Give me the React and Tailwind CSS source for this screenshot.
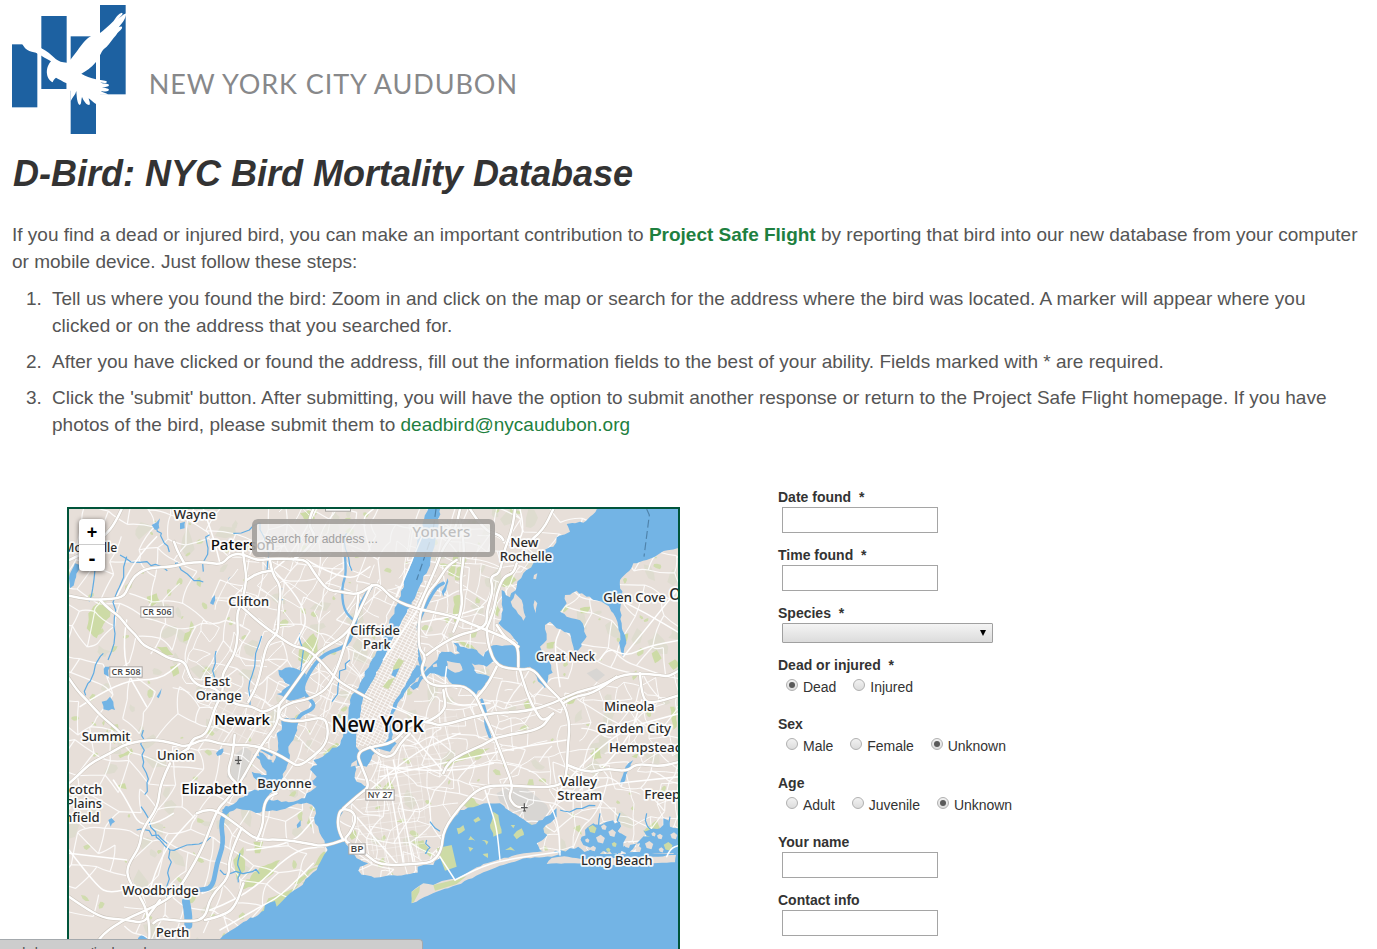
import React from "react";

/* ---------- map geometry (units are thirds of a pixel) ---------- */

function rng(seed) {
  let s = seed;
  return () => {
    s = (s * 1664525 + 1013904223) % 4294967296;
    return s / 4294967296;
  };
}

function pts(str) {
  return str.trim().split(/\s+/).map((p) => p.split(",").map(Number));
}

// Smooth line through the midpoints of a list of points
function smooth(str) {
  const p = pts(str);
  let d = `M${p[0][0]} ${p[0][1]}`;
  for (let i = 1; i < p.length - 1; i++) {
    const mx = (p[i][0] + p[i + 1][0]) / 2;
    const my = (p[i][1] + p[i + 1][1]) / 2;
    d += `Q${p[i][0]} ${p[i][1]} ${mx} ${my}`;
  }
  const l = p[p.length - 1];
  return d + `L${l[0]} ${l[1]}`;
}

function rough(str, amp, seed) {
  const r = rng(seed);
  const p = pts(str);
  const out = [];
  for (let i = 0; i < p.length; i++) {
    const a = p[i];
    const b = p[(i + 1) % p.length];
    const len = Math.hypot(b[0] - a[0], b[1] - a[1]);
    const n = len > 240 ? 1 : Math.max(1, Math.round(len / 13));
    for (let k = 0; k < n; k++) {
      const t = k / n;
      const j = k === 0 ? 0 : amp;
      out.push(
        (a[0] + (b[0] - a[0]) * t + (r() - 0.5) * j).toFixed(1) +
          "," +
          (a[1] + (b[1] - a[1]) * t + (r() - 0.5) * j).toFixed(1)
      );
    }
  }
  return out.join(" ");
}

function mesh(x0, y0, x1, y1, step, jitter, keep, angle, seed) {
  const r = rng(seed);
  const cols = Math.ceil((x1 - x0) / step) + 1;
  const rows = Math.ceil((y1 - y0) / step) + 1;
  const cx = (x0 + x1) / 2;
  const cy = (y0 + y1) / 2;
  const c = Math.cos(angle);
  const s = Math.sin(angle);
  const g = [];
  for (let j = 0; j < rows; j++) {
    g.push([]);
    for (let i = 0; i < cols; i++) {
      const x = x0 + i * step + (r() - 0.5) * jitter - cx;
      const y = y0 + j * step + (r() - 0.5) * jitter - cy;
      g[j].push([Math.round(cx + x * c - y * s), Math.round(cy + x * s + y * c)]);
    }
  }
  let d = "";
  const curve = (a, b) => {
    const mx = (a[0] + b[0]) / 2 + (r() - 0.5) * jitter * 0.4;
    const my = (a[1] + b[1]) / 2 + (r() - 0.5) * jitter * 0.4;
    d += `M${a[0]} ${a[1]}Q${mx.toFixed(0)} ${my.toFixed(0)} ${b[0]} ${b[1]}`;
  };
  for (let j = 0; j < rows; j++)
    for (let i = 0; i < cols; i++) {
      if (i + 1 < cols && r() < keep) curve(g[j][i], g[j][i + 1]);
      if (j + 1 < rows && r() < keep) curve(g[j][i], g[j + 1][i]);
    }
  return d;
}

function blobs(n, size, seed) {
  const r = rng(seed);
  const out = [];
  for (let i = 0; i < n; i++) {
    const x = 27 + r() * 1830;
    const y = 27 + r() * 1300;
    const k = 5 + Math.floor(r() * 4);
    const w = size * (0.35 + r());
    const tilt = r() * 3;
    const p = [];
    for (let q = 0; q < k; q++) {
      const a = (q / k) * Math.PI * 2;
      const m = w * (0.5 + r() * 0.6);
      const ex = Math.cos(a) * m;
      const ey = Math.sin(a) * m * 0.6;
      p.push(
        (x + ex * Math.cos(tilt) - ey * Math.sin(tilt)).toFixed(0) +
          "," +
          (y + ex * Math.sin(tilt) + ey * Math.cos(tilt)).toFixed(0)
      );
    }
    out.push(p.join(" "));
  }
  return out;
}

function creek(x, y, dx, dy, n, seed) {
  const r = rng(seed);
  let d = `M${x} ${y}`;
  for (let i = 0; i < n; i++) {
    x += dx + (r() - 0.5) * 22;
    y += dy + (r() - 0.5) * 22;
    d += `L${x.toFixed(0)} ${y.toFixed(0)}`;
  }
  return d;
}

const HARBOR =
  "430,1360 470,1325 500,1300 560,1262 612,1232 625,1205 645,1203 650,1220 690,1180 720,1160 770,1110 803,1050 785,1010 765,970 765,925 740,908 700,915 660,930 600,938 560,930 530,925 500,945 485,930 500,922 530,905 570,875 605,865 590,840 575,815 620,825 600,780 578,762 640,788 655,750 650,700 665,690 668,655 705,655 712,690 700,720 685,740 690,765 680,800 660,845 630,880 620,895 640,902 700,905 735,895 740,880 770,860 745,845 770,830 750,808 772,795 760,780 800,760 840,735 850,695 865,660 870,600 900,550 930,490 965,430 995,350 1015,300 1050,200 1080,110 1105,20 1142,20 1125,130 1100,220 1070,280 1040,340 1000,410 970,480 940,540 910,590 900,650 890,700 888,740 900,755 930,735 970,730 985,715 985,660 1000,610 1025,570 1050,530 1070,495 1100,500 1070,535 1040,570 1020,600 1000,640 1000,680 995,715 1010,730 990,755 950,745 935,775 920,800 885,795 885,820 890,845 925,860 890,895 850,925 835,960 835,1000 850,1020 870,1045 890,1075 925,1090 900,1100 895,1112 905,1124 960,1132 1000,1126 1073,1118 1073,1100 1120,1095 1145,1060 1145,1010 1170,970 1200,930 1240,922 1280,910 1320,910 1360,940 1400,965 1415,975 1470,945 1490,925 1490,950 1450,985 1462,1005 1430,1030 1440,1050 1500,1055 1530,1062 1860,1062 1860,1360";
const SOUND =
  "1625,20 1590,50 1570,68 1520,72 1530,95 1490,112 1480,140 1440,155 1420,190 1390,220 1370,260 1350,292 1325,270 1325,340 1315,370 1350,400 1375,430 1310,435 1290,440 1270,470 1250,450 1180,428 1200,460 1145,455 1120,490 1090,525 1050,560 1060,570 1110,520 1160,530 1180,555 1220,560 1240,590 1275,560 1290,530 1250,520 1235,490 1280,500 1305,480 1330,500 1375,505 1410,500 1430,530 1455,565 1465,525 1478,518 1460,470 1440,440 1460,420 1455,375 1470,365 1490,385 1530,400 1540,440 1550,462 1580,410 1568,370 1520,350 1500,335 1520,310 1515,285 1550,272 1580,290 1625,305 1660,340 1675,380 1680,440 1690,470 1698,420 1685,370 1680,330 1685,290 1680,240 1720,190 1760,180 1800,160 1860,145 1860,20";
const ROCKAWAY =
  "1055,1175 1090,1150 1120,1155 1160,1140 1190,1138 1240,1108 1270,1092 1320,1078 1380,1062 1475,1050 1500,1062 1475,1070 1400,1074 1330,1095 1260,1122 1190,1155 1130,1175 1055,1210";
const LONG_BEACH =
  "1460,1092 1475,1074 1500,1070 1600,1078 1700,1072 1780,1070 1848,1065 1845,1087 1780,1090 1700,1098 1600,1092 1530,1090";
const MANHATTAN =
  "888,740 890,700 900,650 910,590 940,540 970,480 1000,410 1040,340 1080,270 1095,290 1070,380 1075,470 1050,530 1025,570 1000,610 985,660 985,715 970,730 930,735";

const ISLANDS = [
  "1365,280 1385,300 1397,350 1390,362 1368,330 1352,305",
  "1422,225 1432,220 1428,238 1420,236",
  "1424,300 1432,310 1428,340 1422,325",
  "1160,482 1200,490 1208,510 1185,518 1162,505",
  "1118,495 1130,490 1132,500 1120,502",
  "875,790 890,780 892,795 872,800",
];
const BAY_ISLANDS = [
  "1190,985 1210,975 1215,990 1195,1003",
  "1240,960 1255,950 1262,960 1246,968",
  "1225,1040 1240,1045 1230,1055",
  "1300,935 1315,945 1325,1000 1300,1010 1290,975",
  "1360,1005 1385,985 1392,1005 1370,1018",
  "1265,1020 1285,1025 1280,1035",
  "1352,975 1365,975 1360,985",
  "1225,1020 1232,1008 1246,1022",
  "1335,1050 1352,1040 1365,1052",
  "1268,1062 1284,1060 1284,1074",
];

const MARSH = [
  "1565,1010 1575,990 1600,970 1640,965 1680,965 1680,1000 1700,1010 1690,1040 1740,1030 1740,1060 1860,1060 1860,985 1830,980 1810,955 1800,985 1750,990 1770,1010 1740,1020 1700,1060 1600,1060 1570,1035",
  "1500,1050 1530,1045 1590,1050 1640,1065 1560,1075 1500,1064",
];

const MARSH_ISLANDS = [
  [1598, 988, 13], [1632, 982, 9], [1657, 1000, 12], [1622, 1018, 14], [1663, 1034, 8], [1702, 1035, 10],
  [1768, 1036, 13], [1800, 1010, 9], [1825, 1040, 14], [1600, 1046, 9], [1781, 1003, 7], [1842, 1008, 11],
  [1645, 1050, 7], [1735, 1047, 10], [1582, 1022, 7], [1804, 1050, 8],
];

const LAKES = [
  "655,510 700,503 738,522 732,590 690,602 650,582 690,555 660,530",
  "27,235 45,190 60,195 45,240 30,265",
  "275,75 300,55 298,85 285,90",
  "360,70 375,65 374,85 360,88",
  "135,500 150,500 146,530 132,522",
  "125,605 150,590 160,605 165,630 130,628",
  "450,310 465,285 460,315",
  "505,235 512,228 508,248",
  "290,590 305,565 296,595",
  "145,960 155,954 165,965 152,980",
  "468,760 490,745 490,755 472,768",
  "1145,275 1163,235 1165,245 1150,290",
  "710,975 722,960 722,978 712,985",
  "1705,790 1720,780 1690,850 1680,850",
  "595,755 635,780 635,795 600,775",
];

const PARKS = [
  "85,340 120,300 150,320 150,350 125,385 110,415 80,385",
  "260,290 290,280 300,305 275,320",
  "330,500 350,492 358,520 340,530",
  "290,440 320,440 340,465 310,465",
  "720,440 760,400 775,420 770,470 730,490 715,480",
  "375,400 395,385 385,420 370,425",
  "720,40 750,28 765,55 740,70",
  "1180,160 1200,150 1180,230 1165,225",
  "1190,205 1215,190 1205,240 1185,240",
  "1180,290 1200,285 1198,365 1182,365",
  "1325,240 1350,215 1370,240 1345,262 1328,260",
  "1350,285 1372,280 1370,305 1355,305",
  "1305,300 1320,330 1315,350 1300,340",
  "1185,420 1235,435 1255,455 1215,440",
  "1560,325 1592,320 1580,340 1562,340",
  "1460,430 1485,425 1480,445 1460,445",
  "1680,410 1705,400 1700,425",
  "1775,460 1790,450 1805,475 1785,490",
  "1825,490 1845,478 1858,495 1840,510",
  "1830,620 1843,620 1850,680 1840,690",
  "1590,760 1620,755 1625,775 1600,780",
  "1150,800 1160,780 1250,745 1290,745 1260,765 1190,785 1165,805",
  "1055,1025 1090,1020 1120,1065 1110,1070",
  "965,870 990,840 1003,865",
  "1210,915 1235,890 1260,915 1230,930",
  "520,1080 550,1040 555,1110 530,1140",
  "540,1170 600,1100 660,1080 640,1120 580,1160",
  "580,1025 610,1025 600,1060 585,1060",
  "600,1240 625,1195 690,1170 720,1150 660,1215 620,1250",
  "760,1100 790,1055 800,1055 780,1095",
  "790,760 830,728 845,738 800,785",
  "740,970 748,945 755,985",
  "800,1095 760,1110 720,1150 700,1150 745,1110",
  "740,1200 760,1190 765,1200",
  "175,765 215,745 220,758 180,775",
  "170,860 195,850 200,868",
  "555,760 570,750 560,780",
  "870,1000 885,990 890,1010 875,1020",
  "1390,610 1405,600 1415,625 1400,635",
  "1510,590 1550,580 1540,610 1515,610",
  "1715,770 1735,760 1730,775",
  "1540,985 1560,975 1565,1005",
  "1750,995 1790,960 1800,985 1770,1000",
];

const GREYS = [
  "500,830 530,760 555,740 575,755 560,830 530,855",
  "1310,880 1340,865 1400,865 1460,915 1470,940 1420,978 1390,950 1320,905",
  "1580,520 1610,505 1635,525 1610,545",
];

const MAJOR = [
  "27,287 60,295 120,300 190,293 205,260 225,225 265,203 340,200 373,190 430,185 485,195 510,165 545,160 590,182 640,175 700,178 740,180 760,215 800,270 840,275 895,285 935,255 960,255 1000,300 1080,330 1170,345 1240,375 1280,390 1350,420 1375,440 1375,500",
  "120,300 150,330 180,350 205,385 225,402 250,437 285,450 330,478 375,482 390,535 420,560 460,560 490,590 530,615 580,620 610,640 655,615",
  "185,27 165,70 140,100 100,140 60,165 27,180",
  "342,125 350,150 373,190",
  "548,150 555,200 560,240 545,310 530,340 535,400 525,460 500,500 485,530 490,580 465,620 445,690 425,710 400,715 385,745",
  "630,180 635,220 665,260 655,340 655,400 620,430 605,500 590,560 565,605",
  "635,212 600,215 560,240",
  "545,320 600,370 650,405 700,440 740,445 790,490 830,540 880,570 935,600",
  "895,285 890,360 850,410 800,440 770,460 720,530 670,600 655,615 655,670 600,740 540,850 500,900 470,930 430,1040 380,1130 340,1190 250,1235 190,1260 130,1300 95,1350",
  "935,255 890,350 865,400 850,450 830,510 800,570 740,600 700,605 660,625 655,660 720,665 790,650 805,680 800,730 760,770 715,800 690,785 640,755 580,735 490,735 430,715 380,742 340,730 280,718 200,730 150,760 90,790 50,830 27,850",
  "330,790 300,850 295,920 245,990 240,1040 200,1100 205,1140 240,1190 260,1230 270,1290 265,1350",
  "345,770 385,745",
  "27,535 50,570 80,600 115,640 150,670 185,700 205,730",
  "27,1190 70,1220 130,1255 190,1258 250,1270 270,1240 300,1200",
  "410,940 430,930 470,930 545,985 590,1020 665,1018 740,1030 790,1040 850,1020",
  "545,985 505,1070 510,1130 450,1190 435,1260 370,1265 300,1255 280,1270",
  "590,1020 610,980 610,920 625,890 650,880",
  "435,1260 500,1245 530,1210 550,1150",
  "524,705 520,760 500,820 530,850",
  "850,1020 833,990 835,940 850,925 880,935 888,960 870,1000 850,1020 885,1040 920,1065 960,1097 1080,1092 1120,1085 1145,1050 1150,990 1200,920 1260,860 1340,855 1430,862 1500,858 1520,830 1523,740 1530,670 1510,605 1460,560 1420,505 1380,510 1310,500 1285,440 1280,385",
  "850,925 900,880 930,860 905,800 890,760 930,740 1000,730 1050,670 1110,665 1140,680 1270,640 1400,635 1480,610 1550,575 1620,560 1680,525 1740,520 1800,525 1825,530 1860,510",
  "930,740 960,770 1000,770 1020,730 1050,700",
  "1080,345 1070,440 1100,470 1080,510 1110,560 1200,555 1230,570 1250,592 1270,640 1300,700 1330,780 1360,860 1345,890 1365,920 1390,922",
  "1100,465 1170,410 1280,385 1280,330 1300,270 1290,230 1320,220 1330,160 1345,120 1360,70 1365,27",
  "1280,385 1300,340 1310,280 1330,230 1360,220 1370,190",
  "1375,440 1340,420 1310,375",
  "1250,592 1280,560 1310,500",
  "1380,510 1400,580 1430,640 1450,665 1480,640",
  "1510,610 1540,590 1600,580 1670,530",
  "1740,520 1745,600 1780,610 1860,585",
  "1080,345 1100,280 1130,250 1160,200 1190,180",
  "1200,27 1185,100 1150,140 1130,200 1075,320",
  "1230,27 1270,90 1320,105 1330,120",
  "1420,115 1450,90 1480,27",
  "1522,795 1580,820 1640,805 1700,815 1730,790 1800,800 1860,785",
  "1150,820 1160,790 1210,760 1270,735 1310,710 1440,690 1470,650",
  "1100,665 1160,640 1150,570",
  "1180,395 1210,330 1200,250 1215,150 1200,60",
  "760,27 740,70 770,110 730,160 700,178",
];

const SECOND = [
  "1275,870 1290,920 1310,980 1320,1080",
  "1130,1055 1185,1140",
  "1470,915 1495,960 1500,1065",
  "1185,1140 1250,1105 1330,1080 1500,1055",
  "1820,1070 1830,1045 1860,1035",
  "1075,325 970,480",
  "1090,100 1010,290",
  "990,620 1050,640 1060,660",
  "770,27 700,160 640,210",
  "960,830 1330,750 1520,720",
  "960,800 1150,820 1300,790",
  "880,940 1010,1090",
  "980,800 1030,1090",
  "1000,780 1060,1090",
  "920,880 1050,760 1200,700",
  "1050,700 1150,815",
  "1160,500 1140,620 1290,610",
  "1540,900 1570,860 1860,830",
  "1500,870 1640,700 1860,640",
  "1560,870 1700,740 1745,600",
  "1620,480 1640,440 1700,470 1760,440 1860,420",
  "1690,470 1860,260",
  "1500,560 1480,440 1500,390",
  "1700,310 1760,340 1860,400",
  "60,620 180,540 300,540 360,490",
  "200,360 180,480 260,620",
  "27,1050 110,1160 150,1180 230,1160",
  "27,1060 200,1080",
  "340,940 250,1000 200,900 160,840",
  "270,1170 300,1060 410,940",
  "560,1050 690,1040 760,960",
  "450,1230 560,1190 700,1050 790,1040",
  "480,1290 600,1220 660,1190 760,1090",
  "430,27 460,110 480,190",
  "290,110 230,170 170,290",
  "740,180 860,250 930,200",
  "640,210 760,330 700,440",
  "930,150 900,60 940,27",
  "1380,27 1400,110 1340,130",
  "1060,370 1180,350 1270,320",
];

const LABELS = [
  ["Wayne", 341, 56, 127, 40],
  ["Montville", 10, 155, 162, 40],
  ["Paterson", 452, 151, 193, 45, 1],
  ["Clifton", 505, 318, 122, 40],
  ["Cliffside", 871, 405, 149, 40],
  ["Park", 909, 446, 83, 40],
  ["East", 432, 558, 78, 40],
  ["Orange", 407, 600, 138, 40],
  ["Newark", 463, 674, 167, 45, 1],
  ["New York", 814, 695, 278, 64, 1],
  ["Yonkers", 1057, 110, 174, 45],
  ["New", 1351, 142, 84, 40],
  ["Rochelle", 1319, 184, 158, 40],
  ["Glen Cove", 1630, 306, 187, 40],
  ["Oyster Bay", 1828, 300, 235, 49],
  ["Great Neck", 1428, 482, 177, 35],
  ["Mineola", 1632, 633, 152, 40],
  ["Garden City", 1611, 698, 222, 40],
  ["Hempstead", 1647, 757, 222, 40],
  ["Valley", 1499, 858, 112, 40],
  ["Stream", 1492, 899, 134, 40],
  ["Freeport", 1753, 897, 165, 40],
  ["Long Beach", 1563, 1096, 215, 40],
  ["Summit", 65, 722, 146, 40],
  ["Union", 291, 781, 113, 40],
  ["Elizabeth", 364, 881, 198, 45, 1],
  ["Bayonne", 592, 865, 163, 40],
  ["Scotch", 5, 882, 122, 40],
  ["Plains", 18, 924, 108, 40],
  ["Plainfield", -56, 966, 175, 40],
  ["Woodbridge", 187, 1185, 229, 40],
  ["Perth", 288, 1310, 100, 40],
];

const SHIELDS = [
  ["CR 506", 241, 319, 100],
  ["CR 508", 148, 499, 100],
  ["CR 75", 795, 1, 78],
  ["NY 27", 916, 868, 88],
  ["BP", 865, 1030, 52],
];

const CREEKS = [
  creek(600, 68, 6, 20, 6, 3),
  creek(600, 68, -14, 6, 4, 4),
  creek(180, 165, 22, 4, 8, 5),
  creek(110, 130, -4, 20, 8, 6),
  creek(200, 170, -3, 22, 12, 7),
  creek(345, 190, 14, 10, 6, 8),
  creek(430, 215, 4, -16, 6, 9),
  creek(290, 85, 8, 16, 6, 10),
  creek(470, 610, 2, -18, 8, 11),
  creek(570, 620, 6, -22, 9, 12),
  creek(250, 690, 1, 18, 12, 13),
  creek(330, 1050, 18, 0, 8, 14),
  creek(330, 1050, -8, -14, 8, 15),
  creek(330, 1050, 2, 18, 8, 16),
  creek(540, 1060, 0, 16, 6, 17),
  creek(480, 1110, 18, 4, 8, 18),
  creek(230, 990, 18, 8, 6, 19),
  creek(860, 100, -1, 18, 6, 20),
  creek(130, 460, -3, 16, 8, 21),
  creek(870, 480, -8, 16, 7, 22),
  creek(720, 400, 3, 16, 8, 23),
  creek(1110, 965, 10, 6, 4, 24),
  creek(1100, 1020, 3, 10, 5, 25),
  creek(1500, 930, 16, 0, 6, 26),
  creek(1620, 940, 3, 12, 9, 27),
  creek(1680, 940, -2, 14, 9, 28),
  creek(1760, 940, 2, 12, 9, 29),
  creek(1830, 950, 2, 12, 8, 30),
  creek(665, 265, 6, 10, 4, 31),
  creek(1280, 920, 4, 14, 5, 32),
];

function BirdMap() {
  return (
    <svg className="block h-full w-full" viewBox="27 27 1827 1323" preserveAspectRatio="xMinYMin slice">
      <defs>
        <pattern id="blocks" width="13" height="9" patternUnits="userSpaceOnUse" patternTransform="rotate(27)">
          <path d="M0 0H13M0 0V9" stroke="#fff" strokeWidth="4" />
        </pattern>
        <pattern id="wide" width="34" height="26" patternUnits="userSpaceOnUse" patternTransform="rotate(-8)">
          <path d="M0 0H34M0 0V26" stroke="#fff" strokeWidth="3.4" />
        </pattern>
        <pattern id="tilted" width="28" height="46" patternUnits="userSpaceOnUse" patternTransform="rotate(28)">
          <path d="M0 0H28M0 0V46" stroke="#fff" strokeWidth="3.4" />
        </pattern>
      </defs>
      <rect x="0" y="0" width="1900" height="1400" fill="#e7dfd9" />
      {blobs(150, 34, 42).map((p, i) => (
        <polygon key={i} points={p} fill="#dedccf" />
      ))}
      {blobs(220, 14, 77).map((p, i) => (
        <polygon key={i} points={p} fill="#d0dcae" />
      ))}
      {PARKS.map((p, i) => (
        <polygon key={i} points={rough(p, 6, i + 1)} fill="#cddba6" />
      ))}
      {GREYS.map((p, i) => (
        <polygon key={i} points={p} fill="#d8d6d3" />
      ))}
      <g fill="none" stroke="#fff" strokeOpacity="0.85">
        <path strokeWidth="3.6" d={mesh(-100, -100, 2000, 1500, 64, 50, 0.72, 0.35, 9)} />
        <path strokeWidth="3" d={mesh(880, 600, 1900, 1200, 46, 30, 0.6, -0.15, 19)} />
        <path strokeWidth="3" d={mesh(480, 27, 1000, 700, 44, 30, 0.5, 0.5, 29)} />
        <path strokeWidth="3" d={mesh(1000, 100, 1380, 620, 40, 26, 0.5, 0.2, 39)} />
      </g>
      <polygon points="960,790 1080,800 1110,1090 960,1090 880,980" fill="url(#wide)" opacity="0.75" />
      <polygon points="1000,740 1110,660 1190,640 1200,700 1120,820 960,830 930,790" fill="url(#wide)" opacity="0.6" />
      <polygon points="440,600 600,590 640,700 480,740" fill="url(#tilted)" opacity="0.6" />
      <polygon points="800,560 960,380 900,600 830,720 740,760" fill="url(#tilted)" opacity="0.7" />
      <g fill="none" stroke="#5fabe3" strokeWidth="3.6" strokeLinejoin="round">
        {CREEKS.map((d, i) => (
          <path key={i} d={d} />
        ))}
      </g>
      <g fill="#73b4e5">
        <polygon points={rough(HARBOR, 8, 11)} />
        <polygon points={rough(SOUND, 9, 12)} />
        {MARSH.map((p, i) => (
          <polygon key={i} points={rough(p, 16, i + 60)} />
        ))}
        {LAKES.map((p, i) => (
          <polygon key={i} points={rough(p, 8, i + 30)} />
        ))}
      </g>
      <g fill="none" stroke="#73b4e5" strokeLinejoin="round" strokeLinecap="round">
        <path strokeWidth="11" d={smooth("935,258 900,310 885,370 865,440 790,460 745,520 722,575 765,610 755,630 715,645 700,700")} />
        <path strokeWidth="7" d={smooth("855,170 860,220 845,260 850,330 885,365")} />
        <path strokeWidth="14" d={smooth("500,925 480,960 492,1030 470,1090 458,1165 415,1170")} />
        <path strokeWidth="24" d={smooth("378,1205 385,1240 385,1275")} />
        <path strokeWidth="10" d={smooth("1085,500 1070,450 1065,390 1100,310 1130,260 1150,250")} />
        <path strokeWidth="9" d={smooth("1265,600 1280,640 1275,670 1290,710")} />
        <path strokeWidth="22" d={smooth("245,1318 290,1350")} />
        <path strokeWidth="7" d={smooth("635,765 590,740")} />
        <path strokeWidth="7" d={smooth("1700,1060 1860,1055")} />
      </g>
      {ISLANDS.map((p, i) => (
        <polygon key={i} points={rough(p, 5, i + 80)} fill="#e7dfd9" />
      ))}
      {BAY_ISLANDS.map((p, i) => (
        <polygon key={i} points={rough(p, 6, i + 90)} fill="#cddba6" />
      ))}
      {MARSH_ISLANDS.map(([x, y, r], i) => (
        <polygon
          key={i}
          points={rough(
            `${x - r},${y - r * 0.4} ${x},${y - r} ${x + r * 0.9},${y - r * 0.3} ${x + r * 0.5},${y + r * 0.9} ${x - r * 0.6},${y + r * 0.6}`,
            8,
            i + 120
          )}
          fill={i % 4 === 0 ? "#cddba6" : "#e7dfd9"}
        />
      ))}
      <polygon points={rough(ROCKAWAY, 4, 14)} fill="#e7dfd9" />
      <polygon points="1055,1175 1080,1158 1078,1175 1062,1205 1055,1210" fill="#cddba6" />
      <polygon points="1120,1155 1190,1138 1220,1128 1190,1152 1125,1172" fill="#cddba6" />
      <polygon points="1130,1045 1175,1035 1190,1100 1155,1112" fill="#cddba6" />
      <polygon points={rough(LONG_BEACH, 4, 15)} fill="#e7dfd9" />
      <polygon points={MANHATTAN} fill="#e4dbd4" />
      <polygon points={MANHATTAN} fill="url(#blocks)" />
      <polygon points="1000,500 1015,475 1032,483 1012,515 998,512" fill="#cddba6" />
      <polygon points="985,540 1005,532 985,568 968,560" fill="#cddba6" />
      <polygon points="1000,510 1018,505 1006,532 994,525" fill="#73b4e5" />
      <path d="M1128 27L1118 100L1070 240M1760 27L1768 45L1752 170" fill="none" stroke="#4f83ab" strokeWidth="3.5" strokeDasharray="24 10" />
      <g fill="none" strokeLinejoin="round" strokeLinecap="round">
        {SECOND.map((p, i) => (
          <path key={i} d={smooth(p)} stroke="#fff" strokeWidth="4.5" />
        ))}
        {MAJOR.map((p, i) => (
          <path key={i} d={smooth(p)} stroke="#cbc4bb" strokeWidth="10.5" />
        ))}
        {MAJOR.map((p, i) => (
          <path key={i} d={smooth(p)} stroke="#fff" strokeWidth="7.5" />
        ))}
      </g>
      {[
        [535, 780],
        [1393, 922],
      ].map(([x, y]) => (
        <path key={x} d={`M${x} ${y - 12}V${y + 12}M${x - 10} ${y + 1}H${x + 10}M${x - 5} ${y + 11}H${x + 5}`} stroke="#555" strokeWidth="3.5" />
      ))}
      {SHIELDS.map(([t, x, y, w]) => (
        <g key={t}>
          <rect x={x + 1.5} y={y + 1.5} width={w - 3} height="31" fill="#fff" stroke="#aaa6a2" strokeWidth="3" />
          <text
            x={x + w / 2}
            y={y + 27}
            textAnchor="middle"
            textLength={w - 13}
            lengthAdjust="spacingAndGlyphs"
            fontSize="28"
            fontWeight="600"
            fill="#444"
            className="font-['Open_Sans','Noto_Sans',sans-serif]"
          >
            {t}
          </text>
        </g>
      ))}
      {LABELS.map(([t, x, y, w, s, strong]) => (
        <text
          key={t}
          x={x}
          y={y}
          textLength={w}
          lengthAdjust="spacingAndGlyphs"
          fontSize={s}
          fontWeight="500"
          fill={strong ? "#0c0c0c" : "#2b2b2b"}
          stroke="#fff"
          strokeOpacity="0.9"
          strokeWidth="11"
          strokeLinejoin="round"
          paintOrder="stroke"
          className="font-['Noto_Sans','Open_Sans',sans-serif]"
        >
          {t}
        </text>
      ))}
    </svg>
  );
}

/* ---------- header ---------- */

function Logo() {
  return (
    <svg className="block h-[140px] w-[540px]" viewBox="0 0 1620 420">
      <g fill="#1d61a1">
        <rect x="36" y="133" width="76" height="189" />
        <rect x="124" y="48" width="76" height="219" />
        <rect x="212" y="109" width="76" height="293" />
        <rect x="300" y="15" width="77" height="268" />
      </g>
      <path
        fill="#fff"
        d="M66 131C72 141 78 149 88 153C98 157 106 156 114 162C126 168 138 176 153 184C144 194 139 208 141 222C143 236 150 242 158 247C160 241 163 237 168 233C176 237 188 244 200 250L200 272L212 272L212 304C216 292 226 286 229 273C230 290 231 310 239 315C245 313 243 300 246 291C250 302 260 316 268 315C273 310 266 300 266 295C274 301 280 308 288 312L298 312L298 284L325 284C318 279 308 277 302 274C312 275 324 275 327 270C326 264 312 264 306 261C315 261 326 261 327 255C324 249 306 253 301 247C310 249 321 250 321 245C314 240 300 241 288 238C272 234 256 228 244 221C256 215 274 203 288 186L302 162C306 152 312 145 320 140C330 131 338 116 348 106C352 98 362 92 366 85C368 77 360 80 356 82C366 70 376 60 379 40C370 42 360 54 355 56C360 50 372 42 366 38C356 40 348 52 340 64C326 78 310 92 299 100L272 109C250 122 236 150 218 170C212 178 206 184 200 188C186 188 176 184 168 178C154 164 138 152 124 145L114 131Z"
      />
      <text
        x="446"
        y="282"
        textLength="1105"
        lengthAdjust="spacing"
        fontSize="81"
        fill="#87888a"
        className="font-['Lato',sans-serif]"
      >
        NEW YORK CITY AUDUBON
      </text>
    </svg>
  );
}

/* ---------- form ---------- */

function Label({ text, required }) {
  return (
    <div className="h-5 text-[14px] leading-5 font-bold whitespace-pre text-[#333]">
      {text}
      {required && <span>{"  *"}</span>}
    </div>
  );
}

function TextField({ label, required }) {
  return (
    <div className="mb-3">
      <Label text={label} required={required} />
      <input className="ml-1 block h-[26px] w-[156px] border border-[#a5a5a5] bg-white outline-none" type="text" />
    </div>
  );
}

function Radios({ label, required, options, selected }) {
  return (
    <div className="mb-3">
      <Label text={label} required={required} />
      <div className="flex h-[27px] gap-[17px] pl-2">
        {options.map((o) => (
          <div key={o} className="flex gap-[5px]">
            <span className="mt-1 flex size-3 items-center justify-center rounded-full border border-[#b0b0b0] bg-linear-to-b from-[#f2f2f2] to-[#dcdcdc]">
              {o === selected && <span className="size-1.5 rounded-full bg-[#5a5a5a]" />}
            </span>
            <span className="mt-0.5 text-[14px] leading-5 tracking-[-0.03px] text-[#333]">{o}</span>
          </div>
        ))}
      </div>
    </div>
  );
}

function Step({ n, children }) {
  return (
    <li className="flex">
      <span className="w-10 shrink-0 pl-[14px]">{n}.</span>
      <div>{children}</div>
    </li>
  );
}

export default function App() {
  return (
    <div className="relative h-[949px] w-[1377px] overflow-hidden bg-white font-['Liberation_Sans',Arial,sans-serif]">
      <Logo />
      <h1 className="ml-[13px] h-[60px] pt-[14px] text-[36px] leading-[40px] font-bold whitespace-nowrap text-[#333] italic">
        D-Bird: NYC Bird Mortality Database
      </h1>
      <div className="mt-[21px] ml-3 text-[19px] leading-[27px] whitespace-nowrap text-[#555]">
        <p>
          If you find a dead or injured bird, you can make an important contribution to{" "}
          <b className="text-[#1e8040]">Project Safe Flight</b> by reporting that bird into our new database from your computer
          <br />
          or mobile device. Just follow these steps:
        </p>
        <ol className="mt-[10px] flex flex-col gap-[9px]">
          <Step n={1}>
            <span className="tracking-[0.028px]">
              Tell us where you found the bird: Zoom in and click on the map or search for the address where the bird was located. A marker will appear where you
            </span>
            <br />
            <span className="tracking-[0.02px]">clicked or on the address that you searched for.</span>
          </Step>
          <Step n={2}>
            <span className="tracking-[0.008px]">
              After you have clicked or found the address, fill out the information fields to the best of your ability. Fields marked with * are required.
            </span>
          </Step>
          <Step n={3}>
            <span className="tracking-[0.006px]">
              Click the 'submit' button. After submitting, you will have the option to submit another response or return to the Project Safe Flight homepage. If you have
            </span>
            <br />
            photos of the bird, please submit them to <span className="text-[#1e8040]">deadbird@nycaudubon.org</span>
          </Step>
        </ol>
      </div>

      <div className="mt-[49px] flex">
        <div className="relative mt-5 ml-[67px] h-[500px] w-[613px] shrink-0 overflow-hidden border-2 border-[#00543a]">
          <div className="h-[441px] w-[609px]">
            <BirdMap />
          </div>
          <div className="absolute top-[10px] left-[10px] flex h-[52px] w-[26px] flex-col rounded bg-white text-center text-[18px] font-bold text-black shadow-[0_1px_5px_rgba(0,0,0,0.6)]">
            <span className="h-[26px] border-b border-[#ccc] leading-[26px]">+</span>
            <span className="h-[26px] text-[21px] leading-[26px]">-</span>
          </div>
          <div className="absolute top-[10px] left-[183px] flex h-[38px] w-[243px] items-center rounded-md border-[5px] border-[#8b8783]/70 bg-[#f2f2f2]/75 pt-px pl-2 text-[12px] text-[#a0a0a0]">
            search for address ...
          </div>
        </div>

        <form className="ml-[98px]">
          <TextField label="Date found" required />
          <TextField label="Time found" required />
          <div className="mb-3">
            <Label text="Species" required />
            <div className="ml-1 flex h-5 w-[211px] items-center justify-end rounded-[1px] border border-[#a0a0a0] bg-linear-to-b from-[#f4f4f4] to-[#dcdcdc] pr-[6px]">
              <svg className="h-[6px] w-[6px]" viewBox="0 0 6 6">
                <path d="M0 0H6L3 6Z" fill="#000" />
              </svg>
            </div>
          </div>
          <Radios label="Dead or injured" required options={["Dead", "Injured"]} selected="Dead" />
          <Radios label="Sex" options={["Male", "Female", "Unknown"]} selected="Unknown" />
          <Radios label="Age" options={["Adult", "Juvenile", "Unknown"]} selected="Unknown" />
          <TextField label="Your name" />
          <TextField label="Contact info" />
        </form>
      </div>

      <div className="absolute top-[939px] left-0 h-[20px] w-[423px] rounded-tr border-t border-r border-[#a4a9ad] bg-[#cdcdcd] pt-[3px] font-['Noto_Sans','Open_Sans',sans-serif] text-[14px] leading-[20px] tracking-[0.2px] text-[#4e4e4e]">
        audubon.org/index.php
      </div>
    </div>
  );
}
